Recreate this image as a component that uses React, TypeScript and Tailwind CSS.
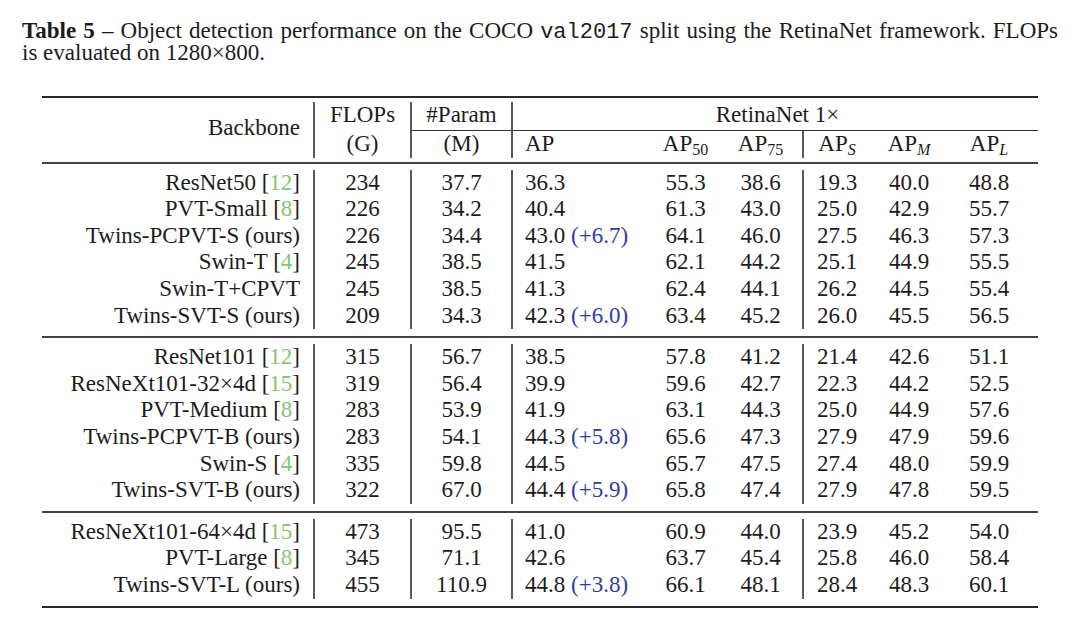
import React from "react";

type Row = [string, string | null, string, string, string, string | null, string, string, string, string, string];

const groups: Row[][] = [
  [
    ["ResNet50", "12", "234", "37.7", "36.3", null, "55.3", "38.6", "19.3", "40.0", "48.8"],
    ["PVT-Small", "8", "226", "34.2", "40.4", null, "61.3", "43.0", "25.0", "42.9", "55.7"],
    ["Twins-PCPVT-S (ours)", null, "226", "34.4", "43.0", "+6.7", "64.1", "46.0", "27.5", "46.3", "57.3"],
    ["Swin-T", "4", "245", "38.5", "41.5", null, "62.1", "44.2", "25.1", "44.9", "55.5"],
    ["Swin-T+CPVT", null, "245", "38.5", "41.3", null, "62.4", "44.1", "26.2", "44.5", "55.4"],
    ["Twins-SVT-S (ours)", null, "209", "34.3", "42.3", "+6.0", "63.4", "45.2", "26.0", "45.5", "56.5"],
  ],
  [
    ["ResNet101", "12", "315", "56.7", "38.5", null, "57.8", "41.2", "21.4", "42.6", "51.1"],
    ["ResNeXt101-32\u00d74d", "15", "319", "56.4", "39.9", null, "59.6", "42.7", "22.3", "44.2", "52.5"],
    ["PVT-Medium", "8", "283", "53.9", "41.9", null, "63.1", "44.3", "25.0", "44.9", "57.6"],
    ["Twins-PCPVT-B (ours)", null, "283", "54.1", "44.3", "+5.8", "65.6", "47.3", "27.9", "47.9", "59.6"],
    ["Swin-S", "4", "335", "59.8", "44.5", null, "65.7", "47.5", "27.4", "48.0", "59.9"],
    ["Twins-SVT-B (ours)", null, "322", "67.0", "44.4", "+5.9", "65.8", "47.4", "27.9", "47.8", "59.5"],
  ],
  [
    ["ResNeXt101-64\u00d74d", "15", "473", "95.5", "41.0", null, "60.9", "44.0", "23.9", "45.2", "54.0"],
    ["PVT-Large", "8", "345", "71.1", "42.6", null, "63.7", "45.4", "25.8", "46.0", "58.4"],
    ["Twins-SVT-L (ours)", null, "455", "110.9", "44.8", "+3.8", "66.1", "48.1", "28.4", "48.3", "60.1"],
  ],
];

const gridCols = "grid grid-cols-[271px_97px_101px_141px_67px_83px_68px_78px_82px]";
const vline = "border-l-2 border-[#5a5a5a]";
const cell = "h-[26.6px] leading-[26.6px] whitespace-nowrap";

function Sub({ children, italic }: { children: React.ReactNode; italic?: boolean }) {
  return (
    <span className={`text-[16px] leading-[0] align-[-4px] ${italic ? "italic" : ""}`}>{children}</span>
  );
}

function Group({ rows }: { rows: Row[] }) {
  return (
    <div className="pt-[6px] pb-[7px] pr-[8px]">
      <div className={gridCols}>
        {rows.map((r, i) => (
          <React.Fragment key={i}>
            <div className={`${cell} text-right pr-[13px]`}>
              {r[0]}
              {r[1] && (
                <>
                  {" "}[<span className="text-[#86c56f]">{r[1]}</span>]
                </>
              )}
            </div>
            <div className={`${cell} ${vline} text-center`}>{r[2]}</div>
            <div className={`${cell} ${vline} text-center`}>{r[3]}</div>
            <div className={`${cell} ${vline} pl-[12px]`}>
              {r[4]}
              {r[5] && <span className="text-[#2c3e9e]"> ({r[5]})</span>}
            </div>
            <div className={`${cell} text-center`}>{r[6]}</div>
            <div className={`${cell} text-center`}>{r[7]}</div>
            <div className={`${cell} ${vline} text-center`}>{r[8]}</div>
            <div className={`${cell} text-center`}>{r[9]}</div>
            <div className={`${cell} text-center`}>{r[10]}</div>
          </React.Fragment>
        ))}
      </div>
    </div>
  );
}

export default function App() {
  return (
    <div className="w-[1074px] h-[636px] bg-white text-[#1c1c1c] font-['Liberation_Serif','Times_New_Roman',serif] pt-[20px] pl-[22px] overflow-hidden">
      <div className="w-[1036px] text-[23px] leading-[22px]">
        <div className="h-[22px] text-justify [text-align-last:justify] whitespace-nowrap">
          <span className="font-bold">Table 5</span> – Object detection performance on the COCO{" "}
          <span className="font-['Liberation_Mono',monospace] text-[22px] leading-[0]">val2017</span> split using the RetinaNet framework. FLOPs
        </div>
        <div className="h-[22px]">is evaluated on 1280×800.</div>
      </div>

      <div className="mt-[32px] ml-[20px] w-[996px] text-[23px]">
        <div className="h-[2px] bg-[#2a2a2a]" />
        {/* header */}
        <div className="pt-[4px] pb-[4px] pr-[8px]">
          <div className={`${gridCols} grid-rows-[29px_26.6px]`}>
            <div className="col-start-1 row-start-1 row-span-2 flex items-center justify-end pr-[13px] pb-[4px] leading-[26.6px]">
              Backbone
            </div>
            <div className={`col-start-2 row-start-1 row-span-2 ${vline} flex flex-col items-center leading-[26.6px]`}>
              <div className="h-[29px]">FLOPs</div>
              <div className="h-[26.6px]">(G)</div>
            </div>
            <div className={`col-start-3 row-start-1 ${vline} border-b border-b-[#333] text-center leading-[26.6px]`}>#Param</div>
            <div className={`col-start-4 col-span-6 row-start-1 ${vline} border-b border-b-[#333] text-center leading-[26.6px] -mr-[8px] pl-[4px]`}>
              RetinaNet 1×
            </div>
            <div className={`col-start-3 row-start-2 ${vline} ${cell} text-center`}>(M)</div>
            <div className={`col-start-4 row-start-2 ${vline} ${cell} pl-[12px]`}>AP</div>
            <div className={`col-start-5 row-start-2 ${cell} text-center`}>
              AP<Sub>50</Sub>
            </div>
            <div className={`col-start-6 row-start-2 ${cell} text-center`}>
              AP<Sub>75</Sub>
            </div>
            <div className={`col-start-7 row-start-2 ${vline} ${cell} text-center`}>
              AP<Sub italic>S</Sub>
            </div>
            <div className={`col-start-8 row-start-2 ${cell} text-center`}>
              AP<Sub italic>M</Sub>
            </div>
            <div className={`col-start-9 row-start-2 ${cell} text-center`}>
              AP<Sub italic>L</Sub>
            </div>
          </div>
        </div>
        <div className="h-[2px] bg-[#444]" />
        <Group rows={groups[0]} />
        <div className="h-[2px] bg-[#444]" />
        <Group rows={groups[1]} />
        <div className="h-[2px] bg-[#444]" />
        <Group rows={groups[2]} />
        <div className="h-[2px] bg-[#2a2a2a]" />
      </div>
    </div>
  );
}
